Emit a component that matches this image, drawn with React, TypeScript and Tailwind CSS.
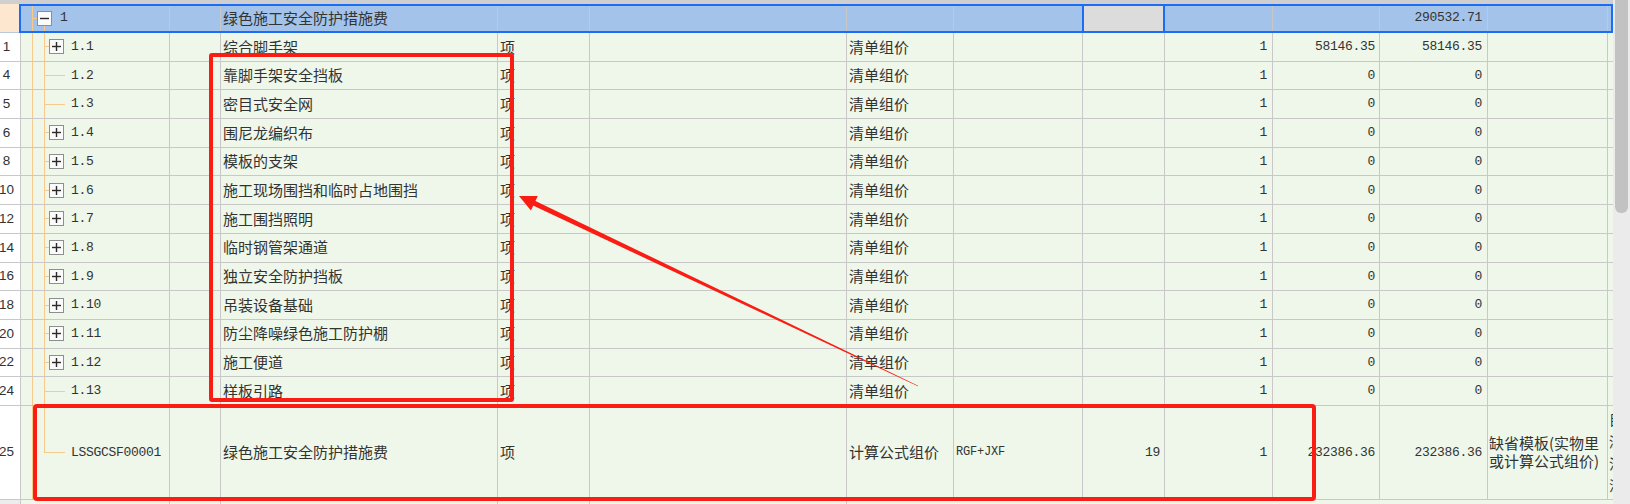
import clsx from "clsx";

/* ─── Column widths (px, incl. right grid line) ─── */
const W = [
  "w-[21px]", "w-[149px]", "w-[51px]", "w-[277px]", "w-[92px]", "w-[257px]", "w-[107px]",
  "w-[129px]", "w-[82px]", "w-[108px]", "w-[107px]", "w-[108px]", "w-[120px]", "w-[5px]",
];

const MONO = "font-['Liberation_Mono',monospace] text-[13px] tracking-[-0.3px]";

type Kind = "plus" | "leaf";
type Item = { n: string; code: string; kind: Kind; name: string; a: string; b: string };

const ROWS: Item[] = [
  { n: "1", code: "1.1", kind: "plus", name: "综合脚手架", a: "58146.35", b: "58146.35" },
  { n: "4", code: "1.2", kind: "leaf", name: "靠脚手架安全挡板", a: "0", b: "0" },
  { n: "5", code: "1.3", kind: "leaf", name: "密目式安全网", a: "0", b: "0" },
  { n: "6", code: "1.4", kind: "plus", name: "围尼龙编织布", a: "0", b: "0" },
  { n: "8", code: "1.5", kind: "plus", name: "模板的支架", a: "0", b: "0" },
  { n: "10", code: "1.6", kind: "plus", name: "施工现场围挡和临时占地围挡", a: "0", b: "0" },
  { n: "12", code: "1.7", kind: "plus", name: "施工围挡照明", a: "0", b: "0" },
  { n: "14", code: "1.8", kind: "plus", name: "临时钢管架通道", a: "0", b: "0" },
  { n: "16", code: "1.9", kind: "plus", name: "独立安全防护挡板", a: "0", b: "0" },
  { n: "18", code: "1.10", kind: "plus", name: "吊装设备基础", a: "0", b: "0" },
  { n: "20", code: "1.11", kind: "plus", name: "防尘降噪绿色施工防护棚", a: "0", b: "0" },
  { n: "22", code: "1.12", kind: "plus", name: "施工便道", a: "0", b: "0" },
  { n: "24", code: "1.13", kind: "leaf", name: "样板引路", a: "0", b: "0" },
];

function Cell({ i, className, children }: { i: number; className?: string; children?: React.ReactNode }) {
  return (
    <div
      className={clsx(
        "flex h-full shrink-0 items-center overflow-hidden",
        i < 13 && "border-r border-[#c8c8c8]",
        W[i],
        className,
      )}
    >
      {children}
    </div>
  );
}

function NumCell({ n }: { n: string }) {
  return (
    <Cell i={0} className="justify-center bg-white pr-[7px]">
      <span className="font-['Liberation_Sans',sans-serif] text-[13.5px] text-[#333]">{n}</span>
    </Cell>
  );
}

/* expand / collapse box */
function Toggle({ open }: { open?: boolean }) {
  return (
    <div className="flex size-[15px] shrink-0 items-center justify-center self-center border border-[#8e8e8e] bg-[#fbfbfb]">
      <svg width="9" height="9" viewBox="0 0 9 9">
        <path d="M0 4.5H9" stroke="#2b2b2b" strokeWidth="1.4" />
        {!open && <path d="M4.5 0V9" stroke="#2b2b2b" strokeWidth="1.4" />}
      </svg>
    </div>
  );
}

const GUIDE = "border-[#f7c98a]";

function Guide() {
  return <div className={clsx("w-[12px] shrink-0 self-stretch border-r", GUIDE)} />;
}

function TreeCell({ kind, code }: { kind: Kind | "last"; code: string }) {
  return (
    <Cell i={1} className="items-stretch">
      <Guide />
      <div className="w-[11px] shrink-0" />
      {kind === "plus" && (
        <>
          <div className={clsx("flex w-[5px] shrink-0 items-center border-l", GUIDE)}>
            <div className="h-px w-full bg-[#f7c98a]" />
          </div>
          <Toggle />
          <span className={clsx(MONO, "ml-[7px] self-center text-[#333]")}>{code}</span>
        </>
      )}
      {kind === "leaf" && (
        <>
          <div className={clsx("flex w-[21px] shrink-0 items-center border-l", GUIDE)}>
            <div className="h-px w-full bg-[#f7c98a]" />
          </div>
          <span className={clsx(MONO, "ml-[6px] self-center text-[#333]")}>{code}</span>
        </>
      )}
      {kind === "last" && (
        <>
          <div className="flex w-[21px] shrink-0 flex-col">
            <div className={clsx("flex-1 border-b border-l", GUIDE)} />
            <div className="flex-1" />
          </div>
          <span className={clsx(MONO, "ml-[6px] self-center text-[#333]")}>{code}</span>
        </>
      )}
    </Cell>
  );
}

/* ─── Header (selected) row ─── */
function HeaderRow() {
  return (
    <div className="relative flex h-[29px] shrink-0 border-b border-[#b8c9df] bg-[#a3c3ea]">
      <Cell i={0} className="bg-[#fde8cf]" />
      <Cell i={1} className="items-stretch border-[#b8c9df]">
        <Guide />
        <div className="flex w-[4px] shrink-0 items-center">
          <div className="h-px w-full bg-[#f7c98a]" />
        </div>
        <div className="flex w-[15px] shrink-0 flex-col">
          <div className="flex-1" />
          <Toggle open />
          <div className={clsx("ml-[7px] flex-1 border-l", GUIDE)} />
        </div>
        <span className={clsx(MONO, "ml-[8px] self-center text-[#333]")}>1</span>
      </Cell>
      <Cell i={2} className="border-[#b8c9df]" />
      <Cell i={3} className="border-[#b8c9df] pl-[2px]">绿色施工安全防护措施费</Cell>
      <Cell i={4} className="border-[#b8c9df]" />
      <Cell i={5} className="border-[#b8c9df]" />
      <Cell i={6} className="border-[#b8c9df]" />
      <Cell i={7} className="border-[#b8c9df]" />
      <Cell i={8} className="border-[#b8c9df] bg-[#dcdcdc]" />
      <Cell i={9} className="border-[#b8c9df]" />
      <Cell i={10} className="border-[#b8c9df]" />
      <Cell i={11} className="justify-end border-[#b8c9df] pr-[5px]">
        <span className={MONO}>290532.71</span>
      </Cell>
      <Cell i={12} className="border-[#b8c9df]" />
      <Cell i={13} />
      {/* selection frame */}
      <div className="pointer-events-none absolute top-0 left-[19px] h-[29px] w-[1594px] border-2 border-[#1b6ef3]" />
      <div className="pointer-events-none absolute top-0 left-[1082px] h-[29px] w-[83px] border-x-2 border-[#1b6ef3]" />
    </div>
  );
}

function DataRow({ r }: { r: Item }) {
  return (
    <div className="flex h-[28.7px] shrink-0 border-b border-[#c8c8c8] bg-[#eef7e9]">
      <NumCell n={r.n} />
      <TreeCell kind={r.kind} code={r.code} />
      <Cell i={2} />
      <Cell i={3} className="pl-[2px] whitespace-nowrap">{r.name}</Cell>
      <Cell i={4} className="pl-[2px]">项</Cell>
      <Cell i={5} />
      <Cell i={6} className="pl-[2px]">清单组价</Cell>
      <Cell i={7} />
      <Cell i={8} />
      <Cell i={9} className="justify-end pr-[5px]">
        <span className={MONO}>1</span>
      </Cell>
      <Cell i={10} className="justify-end pr-[4px]">
        <span className={MONO}>{r.a}</span>
      </Cell>
      <Cell i={11} className="justify-end pr-[5px]">
        <span className={MONO}>{r.b}</span>
      </Cell>
      <Cell i={12} />
      <Cell i={13} />
    </div>
  );
}

function BigRow() {
  return (
    <div className="flex h-[94px] shrink-0 border-b border-[#c8c8c8] bg-[#eef7e9]">
      <NumCell n="25" />
      <TreeCell kind="last" code="LSSGCSF00001" />
      <Cell i={2} />
      <Cell i={3} className="pl-[2px]">绿色施工安全防护措施费</Cell>
      <Cell i={4} className="pl-[2px]">项</Cell>
      <Cell i={5} />
      <Cell i={6} className="pl-[2px]">计算公式组价</Cell>
      <Cell i={7} className="pl-[2px]">
        <span className="font-['Liberation_Mono',monospace] text-[12px] tracking-[-0.2px]">RGF+JXF</span>
      </Cell>
      <Cell i={8} className="justify-end pr-[4px]">
        <span className={MONO}>19</span>
      </Cell>
      <Cell i={9} className="justify-end pr-[5px]">
        <span className={MONO}>1</span>
      </Cell>
      <Cell i={10} className="justify-end pr-[4px]">
        <span className={MONO}>232386.36</span>
      </Cell>
      <Cell i={11} className="justify-end pr-[5px]">
        <span className={MONO}>232386.36</span>
      </Cell>
      <Cell i={12} className="pl-[1px]">
        <div className="flex flex-col text-[15px] leading-[18px] whitespace-nowrap">
          <span>缺省模板(实物里</span>
          <span>或计算公式组价)</span>
        </div>
      </Cell>
      {/* next column, mostly scrolled out of view */}
      <Cell i={13} className="items-start pt-[2px] pl-[1px]">
        <div className="flex flex-col text-[14px] leading-[22px] whitespace-nowrap">
          <span>目</span>
          <span>深</span>
          <span>江</span>
          <span>注</span>
        </div>
      </Cell>
    </div>
  );
}

/* ─── Annotation (red markup) ─── */
function Markup() {
  return (
    <>
      <div className="pointer-events-none absolute top-[53px] left-[209px] h-[349px] w-[305px] rounded-[3px] border-4 border-[#f91d14]" />
      <div className="pointer-events-none absolute top-[404px] left-[33px] h-[97px] w-[1283px] rounded-[4px] border-4 border-[#f91d14]" />
      <svg
        className="pointer-events-none absolute top-0 left-0"
        width="1630"
        height="504"
        viewBox="0 0 1630 504"
      >
        <polygon points="530.4,204.3 917.9,386.3 918.1,385.7 532.9,199.8" fill="#f91d14" />
        <polygon points="519,196 530.9,210.5 537.8,196.1" fill="#f91d14" />
      </svg>
    </>
  );
}

export default function App() {
  return (
    <div className="relative flex h-[504px] w-[1630px] overflow-hidden bg-white font-['Noto_Sans_CJK_SC',sans-serif] text-[15px] text-[#333]">
      <div className="flex w-[1613px] shrink-0 flex-col">
        <div className="h-[4px] shrink-0 bg-[#cfcfcf]" />
        <HeaderRow />
        {ROWS.map((r) => (
          <DataRow key={r.code} r={r} />
        ))}
        <BigRow />
        <div className="flex flex-1 bg-[#eef7e9]">
          <Cell i={0} className="bg-[#ececec]" />
          <Cell i={1} />
          <Cell i={2} />
          <Cell i={3} />
          <Cell i={4} />
          <Cell i={5} />
        </div>
      </div>

      {/* scrollbar */}
      <div className="flex w-[17px] shrink-0 flex-col bg-[#ebebeb]">
        <div className="mx-[2px] h-[213px] rounded-b-[6px] bg-[#c2c2c2]" />
      </div>

      <Markup />
    </div>
  );
}
